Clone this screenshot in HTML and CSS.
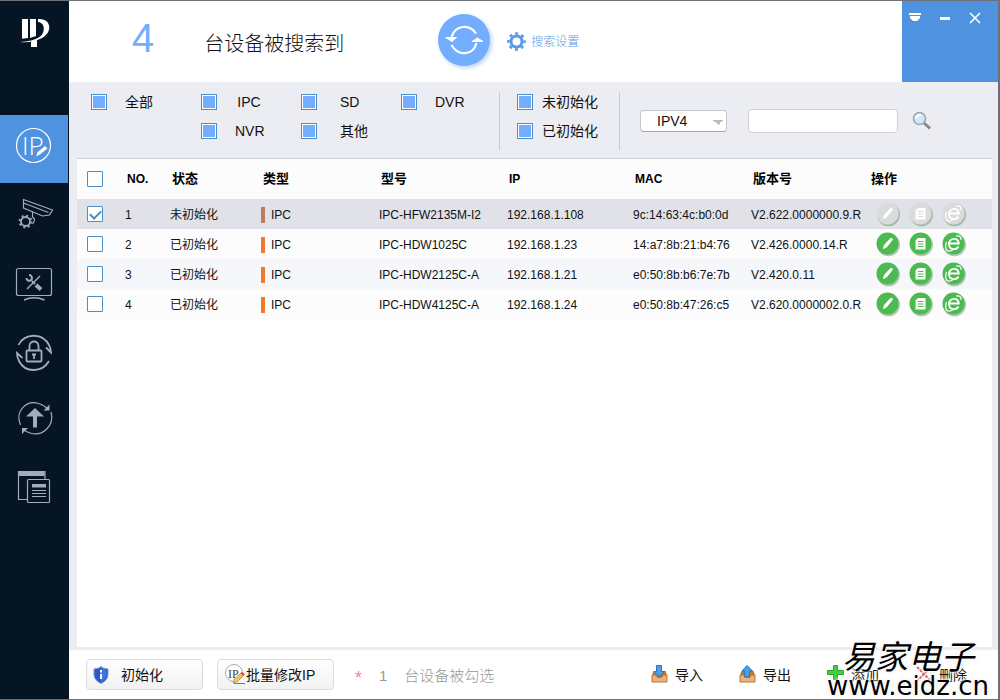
FILE: index.html
```html
<!DOCTYPE html>
<html lang="zh-CN">
<head>
<meta charset="utf-8">
<title>设备搜索</title>
<link rel="stylesheet" href="styles.css">
</head>
<body>
<svg class="defs" aria-hidden="true">
  <symbol id="disc" viewBox="0 0 26 26">
    <circle cx="13.500" cy="13.800" r="11.500" fill="#7fa184" opacity=".6"/>
    <circle cx="12.500" cy="12.500" r="11" fill="currentColor"/>
  </symbol>
  <symbol id="act-edit" viewBox="0 0 26 26">
    <use href="#disc"/>
    <path d="M8.500 17.500l1-3.500 6-6.500q1.500-.8 2 1l-6 7.500z" fill="#fff" stroke="#fff"/>
  </symbol>
  <symbol id="act-doc" viewBox="0 0 26 26">
    <use href="#disc"/>
    <path d="M10 7h7.500v11.500H7.500v-9z" fill="#fff"/>
    <path d="M10 10.500h5.500M10 13h5.500M10 15.500h5.500" stroke="currentColor"/>
  </symbol>
  <symbol id="act-web" viewBox="0 0 26 26">
    <use href="#disc"/>
    <path d="M17.500 15.500c-2 4-9.500 3.500-9.500-2.300 0-7 9.800-7 9.800-.7H8" fill="none" stroke="#fff" stroke-width="1.800"/>
    <path d="M15 5c3.500-.8 5.500.8 5 4M5.500 11c-1.500 4-1 8.500 1.500 9 1.500.3 3.500-.2 5-1.200" fill="none" stroke="#fff" stroke-width="1.200"/>
  </symbol>
</svg>
<div class="app">
  <nav class="sidebar" aria-label="功能">
    <div class="logo">
      <svg width="30" height="30" viewBox="20 18 30 30" fill="#fff"><path d="M22 19h6v19l-6 .8zM30 19h6v17l-6 2zM31 42l6-2v7h-6zM38 19c14-1 15 14 3 19.500-6 2.800-13 4.500-21 3.500 8-.5 15-2 19.500-5C45 33.500 46 23 38 22z"/></svg>
    </div>
    <button class="nav active" aria-label="修改IP">
      <svg viewBox="12 127 44 44"><circle cx="33.500" cy="145.500" r="17"/><text x="22" y="155" class="ip-text">IP</text><path d="M35.500 157l1.500-5 8-6.500 3 3-8 6.500z" class="solid knock"/></svg>
    </button>
    <button class="nav" aria-label="设备配置">
      <svg viewBox="12 195 44 44"><path d="M23.500 199.500L52.500 210l-3 5-7 1-19-8zM23.500 203l25 9.500M32.500 212v5l2 2c0 3-1 4-2 5"/><circle cx="25.500" cy="221.500" r="4.500" stroke-width="1.800"/><circle cx="25.500" cy="221.500" r="6" stroke-width="1.800" stroke-dasharray="2 2.710"/></svg>
    </button>
    <button class="nav" aria-label="系统设置">
      <svg viewBox="12 263 44 44"><rect x="16.500" y="268.500" width="35" height="27" rx="2"/><path d="M24 300q10-4.500 20.500 0" stroke-width="1.500"/><path d="M27 289l13-13" stroke-width="1.500"/><path d="M32 281l3 3" stroke-width="2"/><path d="M36 285l5 4.500" stroke-width="4"/><path d="M29 275c3 0 4 4 1.500 5.500-2 1-4-.5-4-2.500" stroke-width="2"/></svg>
    </button>
    <button class="nav" aria-label="密码重置">
      <svg viewBox="12 331 44 44"><path d="M18.500 345c5-12 25-13 31 1 .8 2 1.500 4 1.500 6.500l-5-5M49 361c-7 12-24 12-30 0-1.300-2.500-2-5.500-2-8l5.500 5" stroke-width="1.800"/><rect x="26.500" y="350.500" width="15" height="11" rx="1" stroke-width="1.800"/><path d="M29.500 350v-4c0-6 9-6 9 0v4M32 354.500h4M34 354v5" stroke-width="1.800"/></svg>
    </button>
    <button class="nav" aria-label="设备升级">
      <svg viewBox="12 399 44 44"><path d="M20.500 425c-6-14 6-25 18-21.500 4 1 7 3 9 5.500M51 412c4 14-9 25-21 21-3-1-5-2-6.500-4"/><path d="M49.500 404.500v6h-6zM22 434v-6h6zM35 408l9 8.500h-7v11h-4v-11h-7z" class="solid"/></svg>
    </button>
    <button class="nav" aria-label="日志">
      <svg viewBox="12 467 44 44"><path d="M45 479v-7.500H18.500v28H27"/><path d="M18.500 471h26v5h-26zM32 484h14v3.500H32z" class="solid"/><rect x="27.500" y="479.500" width="22" height="23" rx="1"/><path d="M32 490.500h14M32 493.500h14M32 496.500h14"/></svg>
    </button>
  </nav>

  <main class="main">
    <header class="header">
      <h1 class="result"><span class="count">4</span><span>台设备被搜索到</span></h1>
      <button class="refresh" aria-label="刷新">
        <svg width="52" height="52" viewBox="0 0 52 52" fill="none" stroke="#fff" stroke-width="2.200"><path d="M13.500 23c4-12.500 18-13 24.500-3.500M38.500 29c-3.500 13-18.500 13.500-25 2"/><path d="M7.500 23.500h11L14 27.500zM34 27.500l5.500-3.500 5.500 3.500z" fill="#fff" stroke-width="1"/></svg>
      </button>
      <a class="settings" href="#">
        <svg width="19" height="19" viewBox="0 0 19 19" fill="none" stroke="#5b9ae4"><circle cx="9.500" cy="9.500" r="5.500" stroke-width="3"/><circle cx="9.500" cy="9.500" r="8" stroke-width="2.600" stroke-dasharray="3 3.280" stroke-dashoffset="1.500"/></svg>
        <span>搜索设置</span>
      </a>
      <div class="window-controls">
        <button aria-label="菜单"><svg width="12" height="12" viewBox="0 0 12 12" fill="#fff"><path d="M0 1h12v2H0zM1 4h10v2L8 9H4L1 6z"/></svg></button>
        <button aria-label="最小化"><svg width="12" height="12" viewBox="0 0 12 12" fill="#fff"><path d="M1 5h10v3H1z"/></svg></button>
        <button aria-label="关闭"><svg width="12" height="12" viewBox="0 0 12 12" stroke="#fff" stroke-width="1.600"><path d="M1 1l10 10M11 1L1 11"/></svg></button>
      </div>
    </header>

    <form class="filters">
      <div class="group types">
        <label><input type="checkbox" class="fill" checked><span>全部</span></label>
        <label><input type="checkbox" class="fill" checked><span>IPC</span></label>
        <label class="wide"><input type="checkbox" class="fill" checked><span>SD</span></label>
        <label><input type="checkbox" class="fill" checked><span>DVR</span></label>
        <label class="second"><input type="checkbox" class="fill" checked><span>NVR</span></label>
        <label class="wide"><input type="checkbox" class="fill" checked><span>其他</span></label>
      </div>
      <div class="rule"></div>
      <div class="group states">
        <label><input type="checkbox" class="fill" checked><span>未初始化</span></label>
        <label><input type="checkbox" class="fill" checked><span>已初始化</span></label>
      </div>
      <div class="rule"></div>
      <div class="search">
        <select class="version" aria-label="IP版本"><option>IPV4</option><option>IPV6</option></select>
        <input class="query" type="text" aria-label="搜索">
        <button type="button" class="find" aria-label="查找">
          <svg width="20" height="20" viewBox="0 0 20 20"><path d="M12 12l6 5.500" stroke="#8d8587" stroke-width="3"/><circle cx="7.500" cy="7.500" r="6" fill="#d3e8f5" stroke="#9ba6b3" stroke-width="1.600"/><path d="M4 7q1-3.500 5-3" stroke="#fff" fill="none" stroke-width="2"/></svg>
        </button>
      </div>
    </form>

    <section class="panel">
      <table class="devices">
        <colgroup><col class="c-check"><col class="c-no"><col class="c-state"><col class="c-type"><col class="c-model"><col class="c-ip"><col class="c-mac"><col class="c-ver"><col></colgroup>
        <thead>
          <tr><th class="pick"><input type="checkbox" class="box" aria-label="全选"></th><th class="latin">NO.</th><th>状态</th><th>类型</th><th>型号</th><th class="latin">IP</th><th class="latin">MAC</th><th>版本号</th><th>操作</th></tr>
        </thead>
        <tbody>
          <tr class="selected"><td class="pick"><input type="checkbox" class="box" aria-label="选择 1" checked></td><td>1</td><td>未初始化</td><td><span class="tag">IPC</span></td><td>IPC-HFW2135M-I2</td><td>192.168.1.108</td><td>9c:14:63:4c:b0:0d</td><td>V2.622.0000000.9.R</td>
            <td class="ops"><div class="actions"><button aria-label="编辑" disabled><svg><use href="#act-edit"/></svg></button><button aria-label="详情" disabled><svg><use href="#act-doc"/></svg></button><button aria-label="网页" disabled><svg><use href="#act-web"/></svg></button></div></td></tr>
          <tr><td class="pick"><input type="checkbox" class="box" aria-label="选择 2"></td><td>2</td><td>已初始化</td><td><span class="tag">IPC</span></td><td>IPC-HDW1025C</td><td>192.168.1.23</td><td>14:a7:8b:21:b4:76</td><td>V2.426.0000.14.R</td>
            <td class="ops"><div class="actions"><button aria-label="编辑"><svg><use href="#act-edit"/></svg></button><button aria-label="详情"><svg><use href="#act-doc"/></svg></button><button aria-label="网页"><svg><use href="#act-web"/></svg></button></div></td></tr>
          <tr class="odd"><td class="pick"><input type="checkbox" class="box" aria-label="选择 3"></td><td>3</td><td>已初始化</td><td><span class="tag">IPC</span></td><td>IPC-HDW2125C-A</td><td>192.168.1.21</td><td>e0:50:8b:b6:7e:7b</td><td>V2.420.0.11</td>
            <td class="ops"><div class="actions"><button aria-label="编辑"><svg><use href="#act-edit"/></svg></button><button aria-label="详情"><svg><use href="#act-doc"/></svg></button><button aria-label="网页"><svg><use href="#act-web"/></svg></button></div></td></tr>
          <tr><td class="pick"><input type="checkbox" class="box" aria-label="选择 4"></td><td>4</td><td>已初始化</td><td><span class="tag">IPC</span></td><td>IPC-HDW4125C-A</td><td>192.168.1.24</td><td>e0:50:8b:47:26:c5</td><td>V2.620.0000002.0.R</td>
            <td class="ops"><div class="actions"><button aria-label="编辑"><svg><use href="#act-edit"/></svg></button><button aria-label="详情"><svg><use href="#act-doc"/></svg></button><button aria-label="网页"><svg><use href="#act-web"/></svg></button></div></td></tr>
        </tbody>
      </table>
    </section>

    <footer class="footer">
      <button class="btn init">
        <svg width="16" height="18" viewBox="0 0 16 18"><path d="M8 .5l2 1.500 5 1v6q-.5 5.500-7 8.500-6.500-3-7-8.500V3l5-1z" fill="#2e56c4" stroke="#7d9be0"/><path d="M8 2v14q5-3 5.500-7V4z" fill="#3f76dc"/><path d="M7 8h2v5H7zM7 4h2v2.500H7z" fill="#fff"/></svg>
        <span>初始化</span>
      </button>
      <button class="btn batch">
        <svg width="21" height="21" viewBox="0 0 21 21"><circle cx="9" cy="9" r="8.500" fill="#fff" stroke="#aaa"/><text x="3" y="14" class="mini-ip">IP</text><path d="M9 19.500h11" stroke="#777"/><path d="M8 19l1.500-4 7-6.500 2.500 2.500-7 6.500z" fill="#f3cd58" stroke="#a27a2b" stroke-width=".7"/><path d="M15.500 9.300l1.800-1.600 2.600 2.500-1.800 1.700z" fill="#e64f50"/></svg>
        <span>批量修改IP</span>
      </button>
      <p class="checked"><span class="star">*</span><span class="number">1</span><span>台设备被勾选</span></p>
      <div class="tools">
        <button><svg width="17" height="20" viewBox="0 0 17 20"><path d="M1 10l1.500-4h12l1.500 4v7H1z" fill="#bd7637"/><path d="M1 10h4l1.500 2.500h4L12 10h4v7H1z" fill="#eeb076" stroke="#b6743b"/><path d="M5.500.5h5v6h3l-5.500 5.500L3 6.500h2.500z" fill="#4aa0e5" stroke="#2b74bd"/></svg><span>导入</span></button>
        <button><svg width="17" height="20" viewBox="0 0 17 20"><path d="M1 10l1.500-4h12l1.500 4v7H1z" fill="#bd7637"/><path d="M1 10h4l1.500 2.500h4L12 10h4v7H1z" fill="#eeb076" stroke="#b6743b"/><path d="M5.500 12h5V6h3L8 .5 3 6h2.500z" fill="#4aa0e5" stroke="#2b74bd"/></svg><span>导出</span></button>
        <button><svg width="17" height="20" viewBox="0 0 17 20"><path d="M6.500.5h4v5h6v4h-6v5h-4v-5h-6v-4h6z" fill="#42cf45" stroke="#2ca532"/></svg><span>添加</span></button>
        <button><svg width="17" height="20" viewBox="0 0 17 20" stroke="#d8636c" stroke-width="2" stroke-dasharray="3 1"><path d="M2 2l13 13M15 3L3 15"/></svg><span>删除</span></button>
      </div>
      <div class="watermark"><span class="brand">易家电子</span><span class="site">www.eidz.cn</span></div>
    </footer>
  </main>
</div>
</body>
</html>
```
FILE: styles.css
```css
* { box-sizing: border-box; }
body { margin: 0; font: 14px/20px "Liberation Sans", "Noto Sans CJK SC", sans-serif; color: #111; }
button { border: 0; padding: 0; background: none; font: inherit; color: inherit; }
svg { display: block; flex: none; }
.defs { position: absolute; width: 0; height: 0; }
.app { display: flex; min-height: 100vh; border: solid #6f6f76; border-width: 1px 2px 1px 0; background: #ecedf2; }

.sidebar { width: 69px; flex: none; background: #051523; }
.logo { height: 114px; padding: 17px 20px; }
.nav { display: flex; align-items: center; justify-content: center; width: 68px; height: 68px; color: #a3acb8; }
.nav svg { width: 44px; height: 44px; fill: none; stroke: currentColor; stroke-width: 1.2; }
.nav.active { background: #4f92e0; color: #fff; }
.nav .solid { fill: currentColor; stroke: none; }
.nav .knock { stroke: #4f92e0; stroke-width: 1; }
.ip-text { font: 300 26px "Open Sans", sans-serif; fill: #fff; stroke: none; }

.main { flex: 1; min-width: 0; display: flex; flex-direction: column; }
.header { display: flex; align-items: center; height: 81px; padding-left: 63px; background: #fff; }
.result { display: flex; align-items: center; gap: 50px; margin: 4px 94px 0 0; font-size: 20px; line-height: 40px; font-weight: 300; }
.count { margin-top: -12px; font-size: 40px; color: #72adff; }
.refresh { width: 52px; height: 52px; margin-bottom: 4px; border-radius: 50%; background: #72adff; box-shadow: 2px 2px 4px #bcd4f5; }
.settings { display: flex; align-items: center; gap: 5px; margin-left: 17px; font-size: 12px; color: #5b9ae4; text-decoration: none; font-weight: 300; }
.window-controls { align-self: stretch; display: flex; align-items: flex-start; gap: 18px; width: 96px; margin-left: auto; padding: 11px 7px; background: #4f92e0; }

.filters { display: flex; align-items: flex-start; height: 76px; padding-left: 22px; }
.group { display: grid; grid-auto-rows: 29px; margin-top: 5px; }
.group label { display: flex; align-items: center; gap: 18px; }
.types { grid-template-columns: 110px 100px 100px 98px; }
.types span { min-width: 28px; text-align: center; }
.types .wide { gap: 23px; }
.types .wide span { text-align: left; }
.types .second { grid-column: 2; }
.rule { width: 1px; height: 58px; margin-top: 10px; background: #c9cbd2; }
.states { padding: 0 21px 0 17px; }
.states label { gap: 9px; }
input[type=checkbox] { appearance: none; flex: none; width: 16px; height: 16px; margin: 0; border: 1px solid #4b8fc9; background: #fff; }
input.fill { padding: 1px; background: #72adff content-box; box-shadow: inset 0 0 0 1px #fff; }
input.box { display: block; border-radius: 1px; }
input.box:checked::before { content: ""; display: block; width: 9px; height: 5px; margin: 3px 2px; border: solid #3f8bd0; border-width: 0 0 2px 2px; transform: rotate(-45deg); }
.search { display: flex; align-items: center; margin: 27px 0 0 20px; }
.version { appearance: none; width: 87px; height: 22px; padding: 0 16px; border: 1px solid #c4c6cc; border-bottom-color: #a3a5ab; border-radius: 4px; font: inherit; color: #111; background: linear-gradient(to bottom left, #bbb 50%, transparent 50%) 72px 9px / 5px 5px no-repeat, linear-gradient(to bottom right, #bbb 50%, transparent 50%) 77px 9px / 5px 5px no-repeat, #fff; }
.query { width: 150px; height: 24px; margin: 0 14px 0 21px; border: 1px solid #cfd1d8; border-radius: 4px; background: #fff; }

.panel { flex: 1; margin: 0 6px 3px 8px; border-top: 1px solid #cdcfd6; background: #fff; }
.devices { width: 100%; table-layout: fixed; border-collapse: collapse; font-size: 12px; line-height: 18px; background: #fcfcfc; }
.c-check { width: 38px; } .c-no { width: 45px; } .c-state { width: 91px; } .c-type { width: 118px; } .c-model { width: 128px; } .c-ip { width: 126px; } .c-mac { width: 118px; } .c-ver { width: 118px; }
.devices th { height: 40px; padding: 0 0 0 12px; text-align: left; font-size: 13px; color: #000; }
.devices th.latin { font-size: 12px; }
.devices td { height: 30px; padding: 2px 0 0 10px; white-space: nowrap; }
.devices .pick { padding: 0 0 0 10px; }
.devices .ops { padding: 0 0 0 16px; }
.selected { background: #e1e2e8; }
.odd { background: #f5f7fb; }
.tag { display: flex; align-items: center; gap: 6px; }
.tag::before { content: ""; width: 4px; height: 16px; background: #ed7b2b; }
.selected .tag::before { background: #b87e64; }
.actions { display: flex; gap: 7px; color: #4bbb50; }
.actions svg { width: 26px; height: 26px; }
.actions button:disabled { color: #d9dbdc; }

.footer { position: relative; display: flex; align-items: center; height: 49px; padding-left: 17px; background: #fff; }
.btn { display: flex; align-items: center; width: 117px; height: 31px; border: 1px solid #dcdce0; border-radius: 4px; background: linear-gradient(#fff, #f1f1f2); }
.init { gap: 12px; padding-left: 6px; margin-right: 14px; }
.batch { padding-left: 7px; }
.mini-ip { font: 12px "Liberation Serif", serif; fill: #444; }
.checked { display: flex; align-items: center; gap: 17px; margin: 3px 0 0 21px; font-size: 15px; font-weight: 300; color: #999; }
.star { color: #f08a90; font-size: 18px; line-height: 16px; padding-top: 3px; }
.tools { display: flex; gap: 36px; margin: 0 31px 0 auto; }
.tools button { display: flex; align-items: center; gap: 7px; }
.watermark { position: absolute; right: 9px; bottom: -1px; display: flex; flex-direction: column; align-items: center; color: #000; text-shadow: 0 0 3px #fff, 0 0 3px #fff, 0 0 4px #ddd; pointer-events: none; }
.brand { font: italic 33px/34px "Noto Sans CJK SC", sans-serif; }
.site { font: 26px/28px "DejaVu Sans", sans-serif; }
```
